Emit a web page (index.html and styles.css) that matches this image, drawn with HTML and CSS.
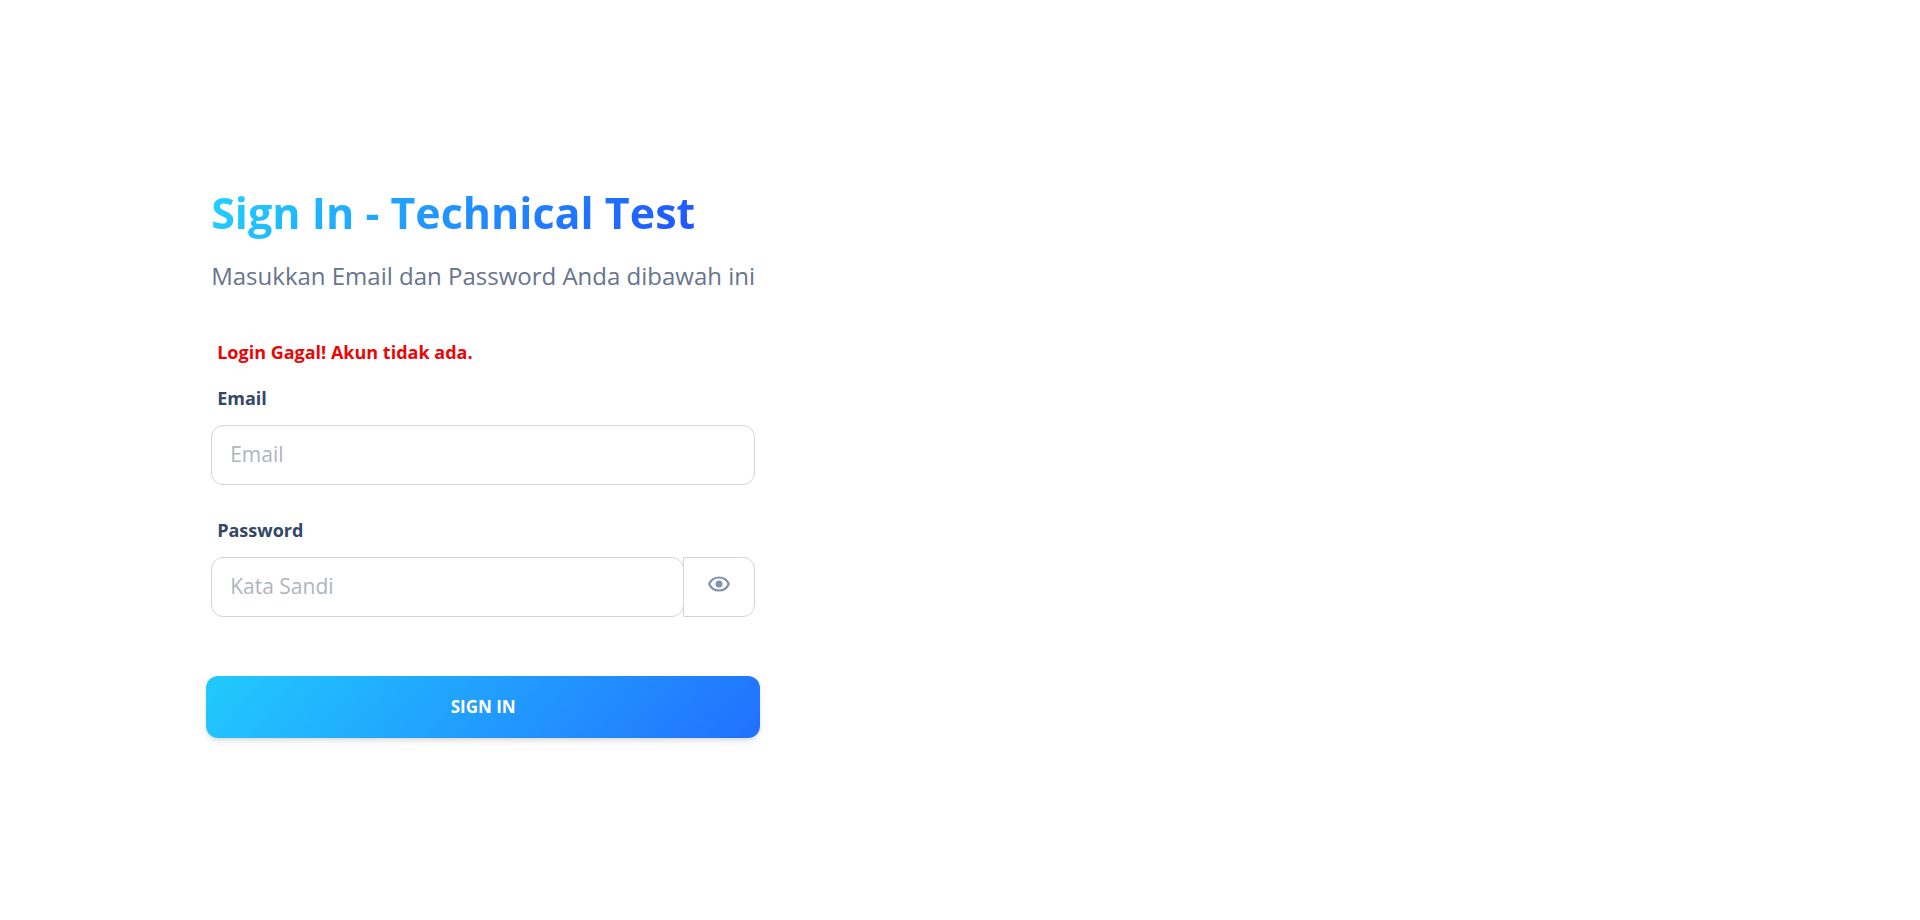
FILE: index.html
```html
<!DOCTYPE html>
<html lang="id">
<head>
<meta charset="utf-8">
<meta name="viewport" content="width=device-width, initial-scale=1">
<title>Sign In - Technical Test</title>
<link rel="stylesheet" href="styles.css">
</head>
<body>
<main class="page">
  <section class="card">
    <header class="card-header">
      <h1 class="title">Sign In - Technical Test</h1>
      <p class="subtitle">Masukkan Email dan Password Anda dibawah ini</p>
    </header>
    <form class="form">
      <p class="error" role="alert">Login Gagal! Akun tidak ada.</p>
      <div class="field">
        <label class="label" for="email">Email</label>
        <input class="input" id="email" type="email" placeholder="Email">
      </div>
      <div class="field">
        <label class="label" for="password">Password</label>
        <div class="input-group">
          <input class="input" id="password" type="password" placeholder="Kata Sandi">
          <button class="toggle" type="button" aria-label="Tampilkan kata sandi">
            <svg class="eye" viewBox="0 0 22 16" aria-hidden="true">
              <path d="M1.200 8C3.200 3.600 6.800 1.500 11 1.500S18.800 3.600 20.800 8C18.800 12.400 15.200 14.500 11 14.500S3.200 12.400 1.200 8Z" fill="none" stroke="currentColor" stroke-width="2.200"/>
              <circle cx="11" cy="8" r="3.500" fill="currentColor"/>
            </svg>
          </button>
        </div>
      </div>
      <button class="submit" type="submit">SIGN IN</button>
    </form>
  </section>
</main>
</body>
</html>
```
FILE: styles.css
```css
* {
  box-sizing: border-box;
}

body {
  margin: 0;
  background: #fff;
  color: #67748e;
  font-family: "Open Sans", sans-serif;
}

.page {
  display: flex;
  align-items: center;
  min-height: 100vh;
  padding: 0 11%;
}

.card {
  width: 544px;
  max-width: 100%;
}

.title {
  width: fit-content;
  margin: 0;
  background: linear-gradient(310deg, #2152ff, #21d4fd);
  background-clip: text;
  -webkit-background-clip: text;
  color: transparent;
  font-size: 43px;
  font-weight: 700;
  line-height: 62px;
}

.subtitle {
  margin: 12px 0 0;
  font-size: 24px;
  line-height: 40px;
}

.form {
  display: flex;
  flex-direction: column;
  margin-top: 42px;
}

.error,
.label {
  display: block;
  margin: 0 6px;
  font-size: 18px;
  font-weight: 700;
  line-height: 28px;
}

.error {
  margin-bottom: 18px;
  color: #ea0606;
}

.label {
  margin-bottom: 13px;
  color: #344767;
}

.field {
  margin-bottom: 31px;
}

.input {
  display: block;
  width: 100%;
  min-width: 0;
  height: 60px;
  padding: 0 18px 2px;
  border: 1px solid #d2d6da;
  border-radius: 12px;
  background: #fff;
  color: #495057;
  font: 400 21px/32px "Open Sans", sans-serif;
}

.input::placeholder {
  color: #adb5bd;
  opacity: 1;
}

.input-group {
  display: flex;
}

.toggle {
  flex: none;
  width: 72px;
  margin-left: -1px;
  padding: 0 0 6px;
  border: 1px solid #d2d6da;
  border-radius: 0 12px 12px 0;
  background: #fff;
  color: #8392ab;
}

.eye {
  display: block;
  width: 22px;
  height: 16px;
  margin: 0 auto;
}

.submit {
  height: 62px;
  margin: 28px -5px 0;
  padding: 0;
  border: 0;
  border-radius: 12px;
  background: linear-gradient(310deg, #2152ff, #21d4fd) 25% 0 / 150% 100%;
  box-shadow: 0 4px 7px -1px rgba(0, 0, 0, .11), 0 2px 4px -1px rgba(0, 0, 0, .07);
  color: #fff;
  font: 700 17px/26px "Open Sans", sans-serif;
}
```
